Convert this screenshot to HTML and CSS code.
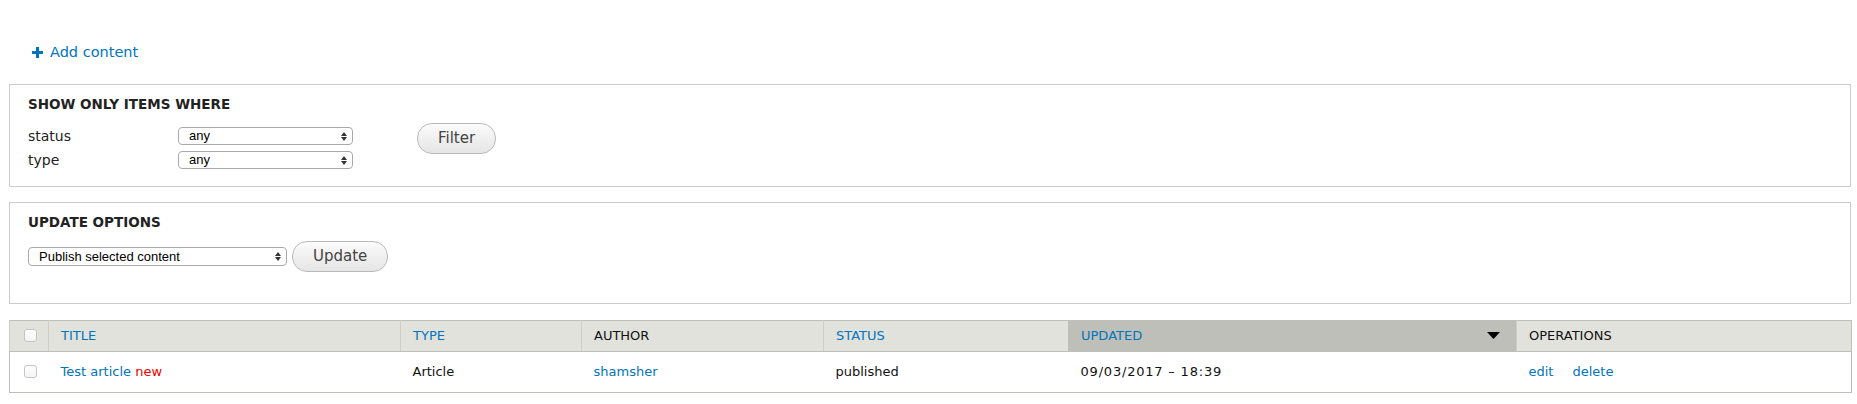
FILE: index.html
```html
<!DOCTYPE html>
<html lang="en">
<head>
    <meta charset="UTF-8">
    <meta name="viewport" content="width=device-width, initial-scale=1.0">
    <title>Content</title>
    <link rel="stylesheet" href="styles.css">
</head>
<body>
    <div class="page">
        <ul class="action-links">
            <li>
                <a href="#">
                    <svg class="plus" width="11" height="11" viewBox="0 0 11 11"><path d="M4 0h3v4h4v3H7v4H4V7H0V4h4z"/></svg>
                    Add content
                </a>
            </li>
        </ul>

        <div class="panel">
            <h2>Show only items where</h2>
            <div class="filter-row">
                <div class="filter-fields">
                    <label for="status">status</label>
                    <div class="select-wrap">
                        <select id="status"><option>any</option><option>published</option><option>not published</option></select>
                        <svg class="select-arrows" width="6" height="9" viewBox="0 0 6 9"><path d="M0 4L3 0L6 4z M0 5h6L3 9z"/></svg>
                    </div>
                    <label for="type">type</label>
                    <div class="select-wrap">
                        <select id="type"><option>any</option><option>Article</option><option>Basic page</option></select>
                        <svg class="select-arrows" width="6" height="9" viewBox="0 0 6 9"><path d="M0 4L3 0L6 4z M0 5h6L3 9z"/></svg>
                    </div>
                </div>
                <button class="btn filter-btn">Filter</button>
            </div>
        </div>

        <div class="panel panel-update">
            <h2>Update options</h2>
            <div class="update-row">
                <div class="select-wrap operation-select">
                    <select><option>Publish selected content</option><option>Unpublish selected content</option><option>Delete selected content</option></select>
                    <svg class="select-arrows" width="6" height="9" viewBox="0 0 6 9"><path d="M0 4L3 0L6 4z M0 5h6L3 9z"/></svg>
                </div>
                <button class="btn">Update</button>
            </div>
        </div>

        <table class="content-table">
            <colgroup>
                <col style="width: 39px">
                <col style="width: 352px">
                <col style="width: 181px">
                <col style="width: 242px">
                <col style="width: 245px">
                <col style="width: 448px">
                <col style="width: 335px">
            </colgroup>
            <thead>
                <tr>
                    <th class="select-all"><input type="checkbox"></th>
                    <th><a href="#">Title</a></th>
                    <th><a href="#">Type</a></th>
                    <th>Author</th>
                    <th><a href="#">Status</a></th>
                    <th class="active">
                        <a href="#">Updated</a>
                        <svg class="sort-arrow" width="13" height="7" viewBox="0 0 13 7"><path d="M0 0h13L6.5 7z"/></svg>
                    </th>
                    <th>Operations</th>
                </tr>
            </thead>
            <tbody>
                <tr>
                    <td class="select-all"><input type="checkbox"></td>
                    <td><a href="#">Test article</a> <span class="marker">new</span></td>
                    <td>Article</td>
                    <td><a href="#">shamsher</a></td>
                    <td>published</td>
                    <td class="date">09/03/2017 – 18:39</td>
                    <td class="operations"><a href="#">edit</a><a href="#">delete</a></td>
                </tr>
            </tbody>
        </table>
    </div>
</body>
</html>
```

FILE: styles.css
```css
body {
    margin: 0;
    font-family: "DejaVu Sans", Verdana, sans-serif;
    color: #222;
    background: #fff;
}
a {
    color: #0074bd;
    text-decoration: none;
}
.page {
    padding: 43px 6px 10px 9px;
}
.action-links {
    list-style: none;
    margin: 0 0 22px;
    padding: 0 0 0 23px;
    font-size: 14.5px;
    line-height: 18px;
}
.action-links a {
    display: inline-flex;
    align-items: center;
    gap: 7px;
}
.plus {
    fill: #0074bd;
}
.panel {
    border: 1px solid #ccc;
    padding: 11px 18px 17px 18px;
    margin-bottom: 15px;
}
.panel h2 {
    margin: 0;
    font-size: 13.5px;
    font-weight: bold;
    line-height: 16px;
    text-transform: uppercase;
    color: #222;
}
.filter-row {
    display: flex;
    align-items: flex-start;
    margin-top: 11px;
}
.filter-fields {
    display: grid;
    grid-template-columns: 150px 175px;
    row-gap: 6px;
    align-items: center;
    padding-top: 4px;
}
.filter-fields label {
    font-size: 14px;
    line-height: 18px;
}
.select-wrap {
    position: relative;
    height: 18px;
}
.select-wrap select {
    appearance: none;
    -webkit-appearance: none;
    display: block;
    width: 100%;
    height: 18px;
    margin: 0;
    padding: 0 18px 0 10px;
    border: 1px solid #a9a9a9;
    border-radius: 4px;
    background: #fff;
    font-family: "Liberation Sans", Arial, sans-serif;
    font-size: 13px;
    color: #000;
}
.select-arrows {
    position: absolute;
    right: 6px;
    top: 5px;
    fill: #333;
    pointer-events: none;
}
.btn {
    height: 31px;
    padding: 0 20px;
    border: 1px solid #b9b9b9;
    border-radius: 15px;
    background: linear-gradient(#fbfbfb, #e5e5e5);
    font-family: "DejaVu Sans", Verdana, sans-serif;
    font-size: 15px;
    color: #444;
    cursor: pointer;
}
.filter-btn {
    margin-left: 64px;
}
.panel-update {
    padding-bottom: 31px;
    margin-bottom: 16px;
}
.update-row {
    display: flex;
    align-items: center;
    gap: 5px;
    margin-top: 11px;
}
.operation-select {
    width: 259px;
    height: 19px;
}
.operation-select select {
    height: 19px;
}
.operation-select .select-arrows {
    top: 5px;
}
.content-table {
    width: 100%;
    border-collapse: collapse;
    table-layout: fixed;
    border: 1px solid #bebfb9;
    font-size: 13px;
}
.content-table th {
    height: 30px;
    padding: 0 12px;
    background: #e1e2dc;
    border-bottom: 1px solid #bebfb9;
    border-left: 1px solid #cdcec8;
    text-align: left;
    font-weight: normal;
    text-transform: uppercase;
    color: #111;
}
.content-table th.active {
    background: #bebfb9;
    border-left-color: #bebfb9;
}
.content-table th.active a {
    float: left;
}
.sort-arrow {
    float: right;
    margin: 4px 4px 0 0;
}
.content-table td {
    height: 40px;
    padding: 0 12px;
    color: #111;
}
.content-table .date {
    letter-spacing: 0.8px;
}
.content-table .select-all {
    padding: 0;
    text-align: center;
}
.content-table input[type="checkbox"] {
    appearance: none;
    -webkit-appearance: none;
    display: block;
    width: 13px;
    height: 13px;
    margin: 0 auto 0 14px;
    border: 1px solid #c4c4c4;
    border-radius: 3px;
    background: linear-gradient(#fff, #f4f4f4);
}
.marker {
    color: #e00;
}
.operations a {
    margin-right: 19px;
}
```
